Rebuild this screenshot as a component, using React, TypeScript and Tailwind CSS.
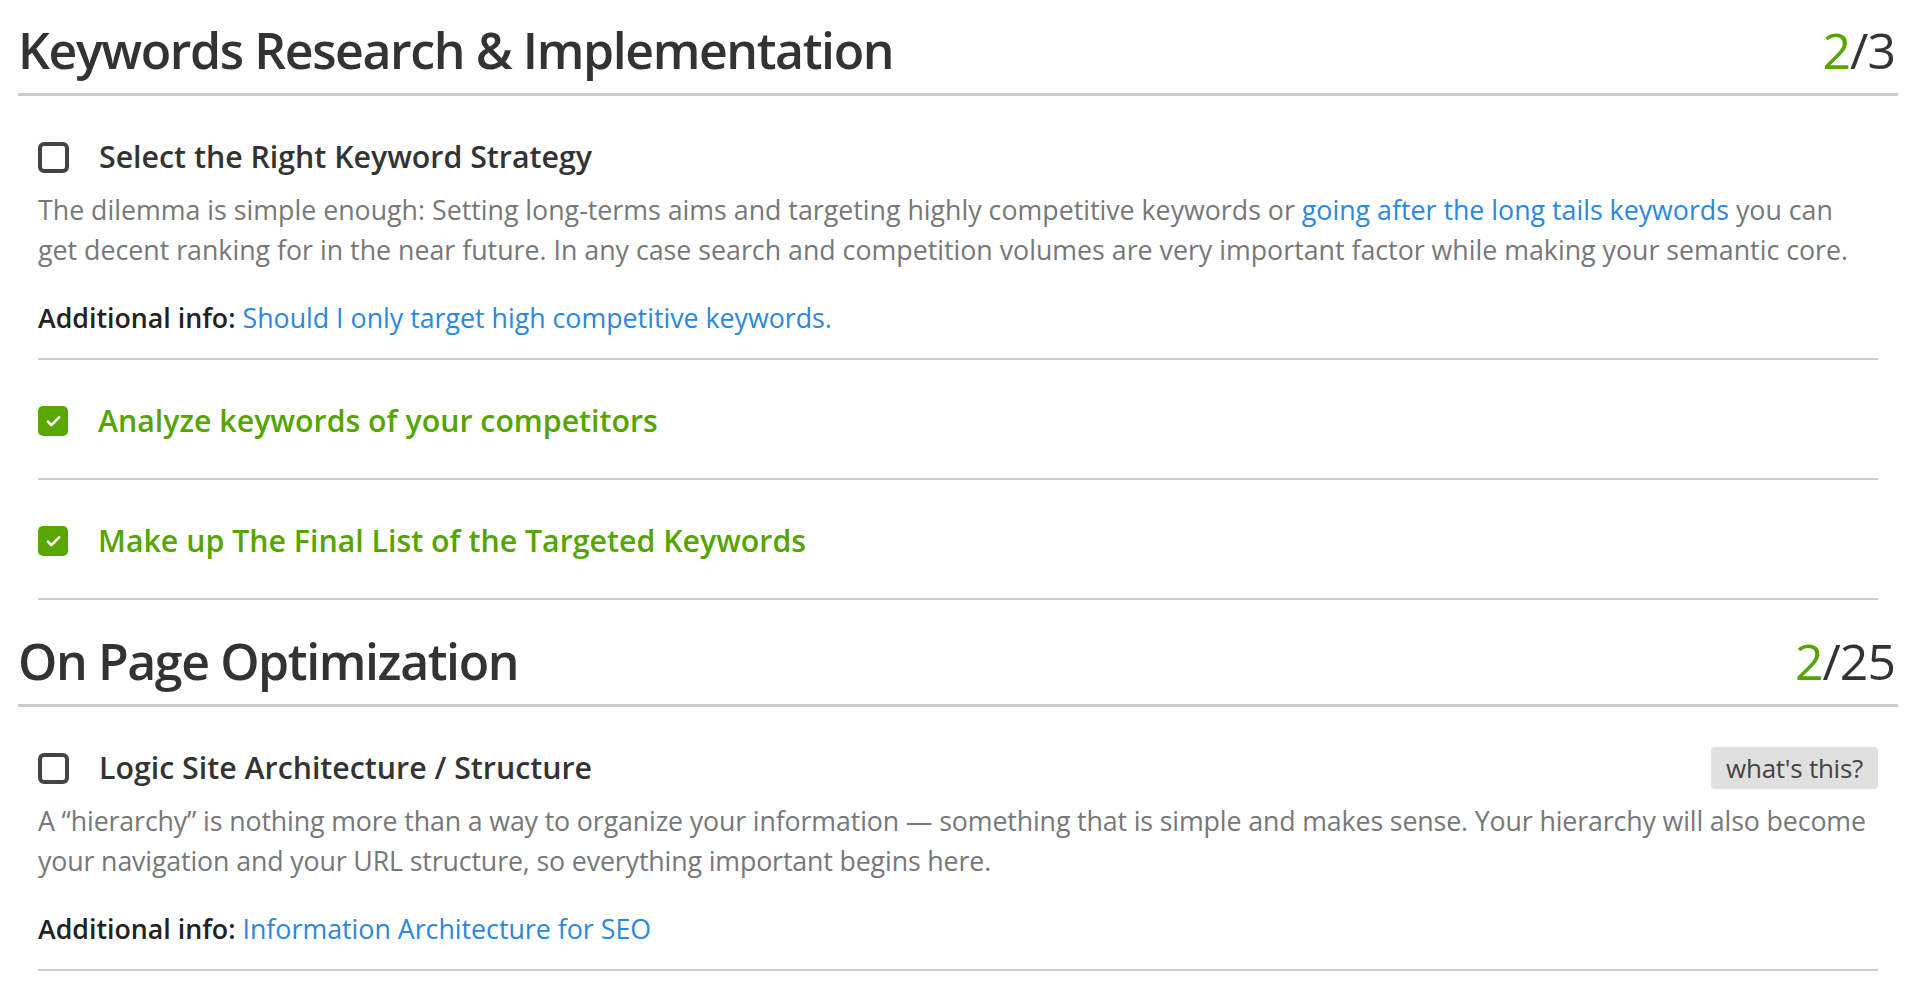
import { Check } from 'lucide-react'

type Item = {
  title: string
  done: boolean
  badge?: boolean
  tight?: boolean
  body?: React.ReactNode
  info?: { label: string; href: string }
}

const keywords: Item[] = [
  {
    title: 'Select the Right Keyword Strategy',
    done: false,
    body: (
      <>
        The dilemma is simple enough: Setting long-terms aims and targeting highly competitive keywords or{' '}
        <a href="#" className="text-[#2b87dd]">going after the long tails keywords</a> you can get decent ranking for in the
        near future. In any case search and competition volumes are very important factor while making your semantic core.
      </>
    ),
    info: { label: 'Should I only target high competitive keywords.', href: '#' },
  },
  { title: 'Analyze keywords of your competitors', done: true },
  { title: 'Make up The Final List of the Targeted Keywords', done: true },
]

const onPage: Item[] = [
  {
    title: 'Logic Site Architecture / Structure',
    done: false,
    badge: true,
    tight: true,
    body: (
      <>
        A “hierarchy” is nothing more than a way to organize your information — something that is simple and makes sense.
        Your hierarchy will also become your navigation and your URL structure, so everything important begins here.
      </>
    ),
    info: { label: 'Information Architecture for SEO', href: '#' },
  },
]

function Checkbox({ checked }: { checked: boolean }) {
  if (checked) {
    return (
      <span className="w-[30px] h-[30px] rounded-[5px] bg-[#58a700] flex items-center justify-center shrink-0">
        <Check className="w-[17px] h-[17px] text-white" strokeWidth={3.5} />
      </span>
    )
  }
  return <span className="w-[31px] h-[31px] rounded-[6px] border-[4px] border-[#444] shrink-0" />
}

function Row({ item }: { item: Item }) {
  return (
    <li className={`border-b-2 border-[#ccc] pt-[41px] ${item.body ? 'pb-[20px]' : 'pb-[37px]'}`}>
      <div className="flex items-center justify-between h-[40px]">
        <label className="flex items-center gap-[30px]">
          <Checkbox checked={item.done} />
          <span
            className={`text-[30.3px] leading-[40px] font-semibold ${
              item.done ? 'text-[#56a400]' : 'text-[#333]'
            }`}
          >
            {item.title}
          </span>
        </label>
        {item.badge && (
          <span className="h-[42px] px-[15px] rounded-[4px] bg-[#e0e0e0] text-[#444] text-[26px] leading-[42px] tracking-[-0.01em]">
            what's this?
          </span>
        )}
      </div>
      {item.body && (
        <>
          <p
            className={`mt-[13px] text-[26.75px] leading-[40px] text-[#777] ${
              item.tight ? 'tracking-[-0.005em]' : ''
            }`}
          >
            {item.body}
          </p>
          <p className="mt-[28px] text-[26.75px] leading-[40px] text-[#222]">
            <span className="font-semibold">Additional info:</span>{' '}
            <a href={item.info?.href} className="text-[#2b87dd]">{item.info?.label}</a>
          </p>
        </>
      )}
    </li>
  )
}

function Section({
  title,
  items,
  done,
  total,
  className = '',
}: {
  title: string
  items: Item[]
  done: number
  total: number
  className?: string
}) {
  return (
    <section className={className}>
      <div className="flex items-end justify-between pt-[20px] pb-[13px] border-b-[3px] border-[#ccc] text-[#333]">
        <h2 className="text-[50px] leading-[60px] font-semibold tracking-[-0.028em]">{title}</h2>
        <div className="text-[50px] leading-[60px] tracking-[-0.02em] pr-[3px]">
          <span className="text-[#56a400]">{done}</span>/{total}
        </div>
      </div>
      <ul className="px-[20px]">
        {items.map((item) => (
          <Row key={item.title} item={item} />
        ))}
      </ul>
    </section>
  )
}

export default function App() {
  return (
    <div className="min-h-screen bg-white pl-[18px] pr-[20px] font-['Open_Sans','Noto_Sans',sans-serif]">
      <Section title="Keywords Research & Implementation" items={keywords} done={2} total={3} />
      <Section title="On Page Optimization" items={onPage} done={2} total={25} className="mt-[11px]" />
    </div>
  )
}
